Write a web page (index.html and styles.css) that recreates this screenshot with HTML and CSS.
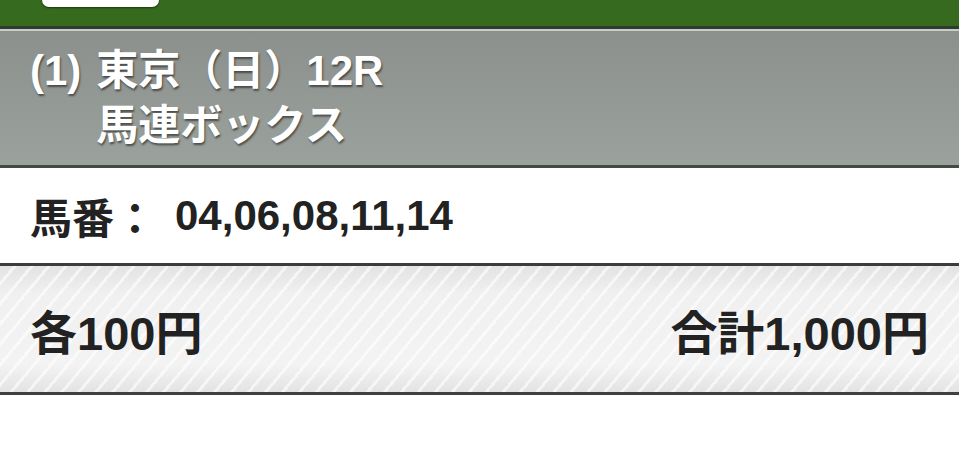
FILE: index.html
```html
<!DOCTYPE html>
<html lang="ja">

<head>
    <meta charset="UTF-8">
    <meta name="viewport" content="width=device-width, initial-scale=1.0">
    <title>馬連ボックス</title>
    <link rel="stylesheet" href="styles.css">
</head>

<body>
    <!-- 上部のナビバー -->
    <div class="topbar">
        <a class="back-btn" href="#"></a>
    </div>

    <!-- レース名 -->
    <div class="race-head">
        <span class="race-no">(1)</span>
        <div class="race-title">
            <div>東京（日）12R</div>
            <div>馬連ボックス</div>
        </div>
    </div>

    <!-- 馬番 -->
    <div class="numbers">
        <span>馬番：</span>
        <span>04,06,08,11,14</span>
    </div>

    <!-- 金額 -->
    <div class="amount">
        <span>各100円</span>
        <span>合計1,000円</span>
    </div>
</body>

</html>
```

FILE: styles.css
```css
body {
    margin: 0;
    font-family: "Liberation Sans", "Noto Sans CJK JP", sans-serif;
    font-weight: bold;
    background: #fff;
    color: #222;
}

/* ナビバー */
.topbar {
    height: 26px;
    background: #366b1f;
    border-bottom: 3px solid #2f3b2e;
    box-shadow: 0 2px 0 #c6ccc6;
    margin-bottom: 2px;
    padding-left: 42px;
    display: flex;
    overflow: hidden;
}

.back-btn {
    display: block;
    width: 117px;
    height: 40px;
    margin-top: -33px;
    background: #fff;
    border-radius: 7px;
    box-shadow: 0 1px 2px rgba(0, 0, 0, 0.5);
}

/* レース名 */
.race-head {
    height: 137px;
    box-sizing: border-box;
    padding: 12px 30px 0;
    display: flex;
    gap: 15px;
    background: linear-gradient(#8b908c, #9ba19c);
    border-bottom: 3px solid #434a46;
    color: #fff;
    font-size: 42px;
    line-height: 55px;
    text-shadow: 1px 2px 2px rgba(0, 0, 0, 0.5);
}

/* 馬番 */
.numbers {
    height: 95px;
    padding: 0 30px;
    display: flex;
    align-items: center;
    gap: 19px;
    font-size: 42px;
    border-bottom: 3px solid #3c3c3c;
}

/* 金額 */
.amount {
    height: 126px;
    padding: 0 30px;
    display: flex;
    align-items: center;
    justify-content: space-between;
    font-size: 47px;
    border-bottom: 3px solid #404040;
    background:
        repeating-linear-gradient(130deg, transparent 0 10px, rgba(255, 255, 255, 0.6) 10px 13px),
        linear-gradient(#e3e3e3, #f0f0f0 22%, #f3f3f3 78%, #e3e3e3);
}
```
